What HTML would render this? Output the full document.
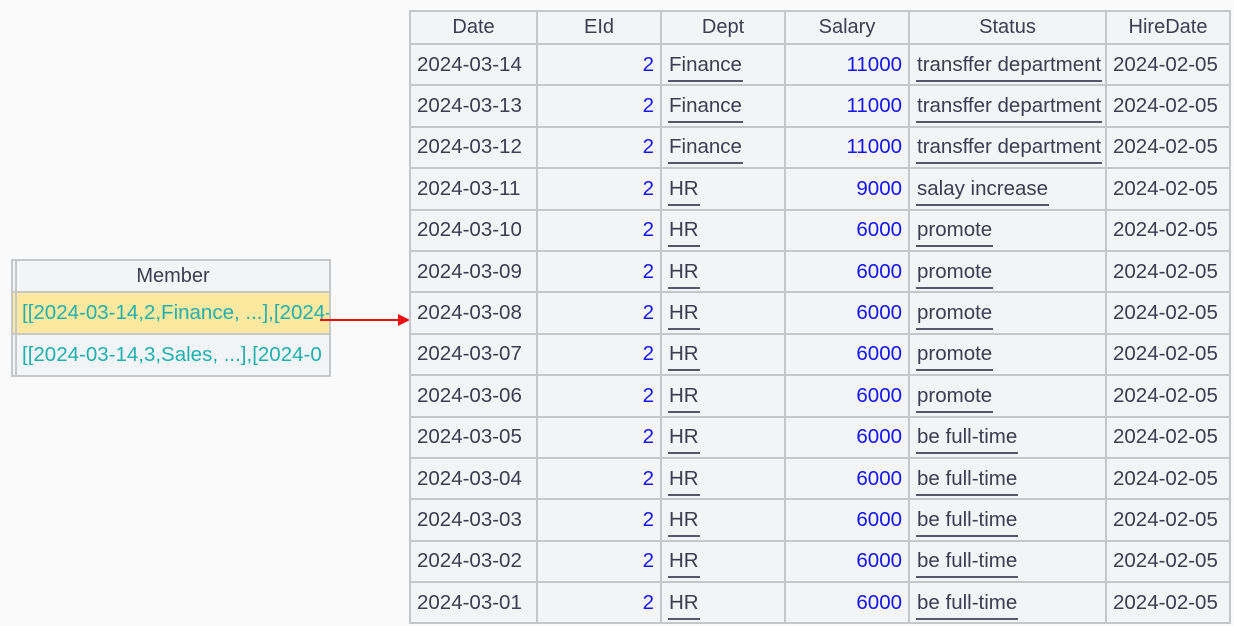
<!DOCTYPE html>
<html><head><meta charset="utf-8"><style>
body{margin:0;width:1234px;height:626px;background:#fafafa;font-family:"Liberation Sans",sans-serif;position:relative;overflow:hidden}
table{border-collapse:collapse;table-layout:fixed;position:absolute}
td,th{border:2px solid #c4c8cb;background:#f3f4f5;color:#3d3d52;font-size:20.5px;font-weight:normal;padding:0 6px;white-space:nowrap;overflow:hidden}
#t{left:409px;top:10px;width:821px}
#t th{height:31px;text-align:center;font-size:20px}
#t td{height:39.4px}
.n{text-align:right;color:#1515f0}
.u span{border-bottom:2px solid #55566a;padding:0 1px 4px 1px}
#m{left:11px;top:259px;width:320px}
#m th{height:30px;text-align:center;font-size:20px}
#m td{height:40px;color:#1fb0b0;padding-left:5px;padding-right:0;text-overflow:clip}
#m td.y{background:#fde8a0}
</style></head><body>
<table id="m"><colgroup><col style="width:4px"><col></colgroup>
<tr><th style="padding:0"></th><th>Member</th></tr>
<tr><td class="y" style="padding:0"></td><td class="y">[[2024-03-14,2,Finance, ...],[2024-0</td></tr>
<tr><td style="padding:0"></td><td>[[2024-03-14,3,Sales, ...],[2024-0</td></tr>
</table>
<svg style="position:absolute;left:320px;top:313px" width="92" height="14"><line x1="0" y1="7" x2="80" y2="7" stroke="#e81010" stroke-width="2"/><polygon points="78,1 90,7 78,13" fill="#e81010"/></svg>
<table id="t"><colgroup><col style="width:127px"><col style="width:124px"><col style="width:124px"><col style="width:124px"><col style="width:197px"><col style="width:124px"></colgroup>
<tr><th>Date</th><th>EId</th><th>Dept</th><th>Salary</th><th>Status</th><th>HireDate</th></tr>
<tr><td>2024-03-14</td><td class="n">2</td><td class="u"><span>Finance</span></td><td class="n">11000</td><td class="u"><span>transffer department</span></td><td>2024-02-05</td></tr>
<tr><td>2024-03-13</td><td class="n">2</td><td class="u"><span>Finance</span></td><td class="n">11000</td><td class="u"><span>transffer department</span></td><td>2024-02-05</td></tr>
<tr><td>2024-03-12</td><td class="n">2</td><td class="u"><span>Finance</span></td><td class="n">11000</td><td class="u"><span>transffer department</span></td><td>2024-02-05</td></tr>
<tr><td>2024-03-11</td><td class="n">2</td><td class="u"><span>HR</span></td><td class="n">9000</td><td class="u"><span>salay increase</span></td><td>2024-02-05</td></tr>
<tr><td>2024-03-10</td><td class="n">2</td><td class="u"><span>HR</span></td><td class="n">6000</td><td class="u"><span>promote</span></td><td>2024-02-05</td></tr>
<tr><td>2024-03-09</td><td class="n">2</td><td class="u"><span>HR</span></td><td class="n">6000</td><td class="u"><span>promote</span></td><td>2024-02-05</td></tr>
<tr><td>2024-03-08</td><td class="n">2</td><td class="u"><span>HR</span></td><td class="n">6000</td><td class="u"><span>promote</span></td><td>2024-02-05</td></tr>
<tr><td>2024-03-07</td><td class="n">2</td><td class="u"><span>HR</span></td><td class="n">6000</td><td class="u"><span>promote</span></td><td>2024-02-05</td></tr>
<tr><td>2024-03-06</td><td class="n">2</td><td class="u"><span>HR</span></td><td class="n">6000</td><td class="u"><span>promote</span></td><td>2024-02-05</td></tr>
<tr><td>2024-03-05</td><td class="n">2</td><td class="u"><span>HR</span></td><td class="n">6000</td><td class="u"><span>be full-time</span></td><td>2024-02-05</td></tr>
<tr><td>2024-03-04</td><td class="n">2</td><td class="u"><span>HR</span></td><td class="n">6000</td><td class="u"><span>be full-time</span></td><td>2024-02-05</td></tr>
<tr><td>2024-03-03</td><td class="n">2</td><td class="u"><span>HR</span></td><td class="n">6000</td><td class="u"><span>be full-time</span></td><td>2024-02-05</td></tr>
<tr><td>2024-03-02</td><td class="n">2</td><td class="u"><span>HR</span></td><td class="n">6000</td><td class="u"><span>be full-time</span></td><td>2024-02-05</td></tr>
<tr><td>2024-03-01</td><td class="n">2</td><td class="u"><span>HR</span></td><td class="n">6000</td><td class="u"><span>be full-time</span></td><td>2024-02-05</td></tr>
</table>
</body></html>
